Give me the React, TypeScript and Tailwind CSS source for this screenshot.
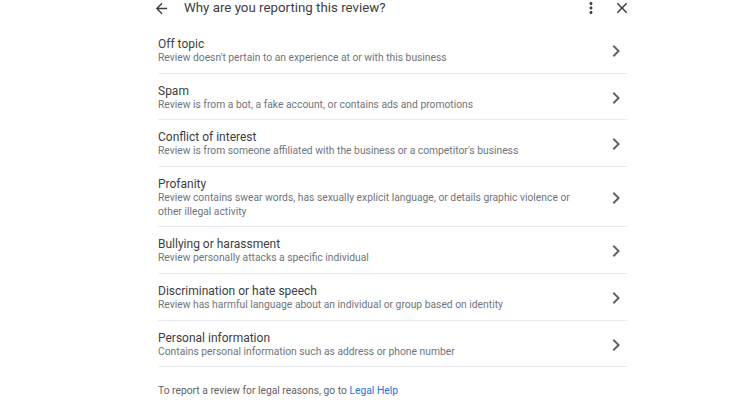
import React from "react";

const rows: { title: string; sub: string[] }[] = [
  { title: "Off topic", sub: ["Review doesn't pertain to an experience at or with this business"] },
  { title: "Spam", sub: ["Review is from a bot, a fake account, or contains ads and promotions"] },
  { title: "Conflict of interest", sub: ["Review is from someone affiliated with the business or a competitor's business"] },
  {
    title: "Profanity",
    sub: [
      "Review contains swear words, has sexually explicit language, or details graphic violence or",
      "other illegal activity",
    ],
  },
  { title: "Bullying or harassment", sub: ["Review personally attacks a specific individual"] },
  { title: "Discrimination or hate speech", sub: ["Review has harmful language about an individual or group based on identity"] },
  { title: "Personal information", sub: ["Contains personal information such as address or phone number"] },
];

function Chevron() {
  return (
    <svg width="24" height="24" viewBox="0 0 24 24" className="shrink-0 fill-[#5f6368] mr-[-1px]">
      <path d="M10 6 8.59 7.41 13.17 12l-4.58 4.59L10 18l6-6z" />
    </svg>
  );
}

export default function App() {
  return (
    <div className="w-[750px] h-[400px] bg-white overflow-hidden" style={{ fontFamily: "Roboto, 'Noto Sans', sans-serif" }}>
      <div className="ml-[158px] w-[469px]">
        <div className="flex items-center h-[16px] mb-[11px]">
          <svg width="17" height="17" viewBox="0 0 24 24" className="ml-[-5px] shrink-0 fill-[#3c4043]">
            <path d="M20 11H7.83l5.59-5.59L12 4l-8 8 8 8 1.41-1.41L7.83 13H20v-2z" />
          </svg>
          <div className="ml-[14px] text-[13.3px] leading-[16px] text-[#3c4043] flex-1">Why are you reporting this review?</div>
          <svg width="18" height="18" viewBox="0 0 24 24" className="shrink-0 fill-[#3c4043] mr-[13px]">
            <path d="M12 8c1.1 0 2-.9 2-2s-.9-2-2-2-2 .9-2 2 .9 2 2 2zm0 2c-1.1 0-2 .9-2 2s.9 2 2 2 2-.9 2-2-.9-2-2-2zm0 6c-1.1 0-2 .9-2 2s.9 2 2 2 2-.9 2-2-.9-2-2-2z" />
          </svg>
          <svg width="18" height="18" viewBox="0 0 24 24" className="shrink-0 fill-[#3c4043] mr-[-4px]">
            <path d="M19 6.41 17.59 5 12 10.59 6.41 5 5 6.41 10.59 12 5 17.59 6.41 19 12 13.41 17.59 19 19 17.59 13.41 12z" />
          </svg>
        </div>
        {rows.map((r) => (
          <div key={r.title} className="flex items-center border-b border-[#e8eaed] pt-[10px] pb-[7.6px]">
            <div className="flex-1">
              <div className="text-[12px] leading-[14px] text-[#3c4043]">{r.title}</div>
              {r.sub.map((s) => (
                <div key={s} className="text-[10.3px] leading-[14px] text-[#70757a]">
                  {s}
                </div>
              ))}
            </div>
            <Chevron />
          </div>
        ))}
        <div className="mt-[17px] text-[10.3px] leading-[14px] text-[#5f6368]">
          To report a review for legal reasons, go to <span className="text-[#1a73e8]">Legal Help</span>
        </div>
      </div>
    </div>
  );
}
